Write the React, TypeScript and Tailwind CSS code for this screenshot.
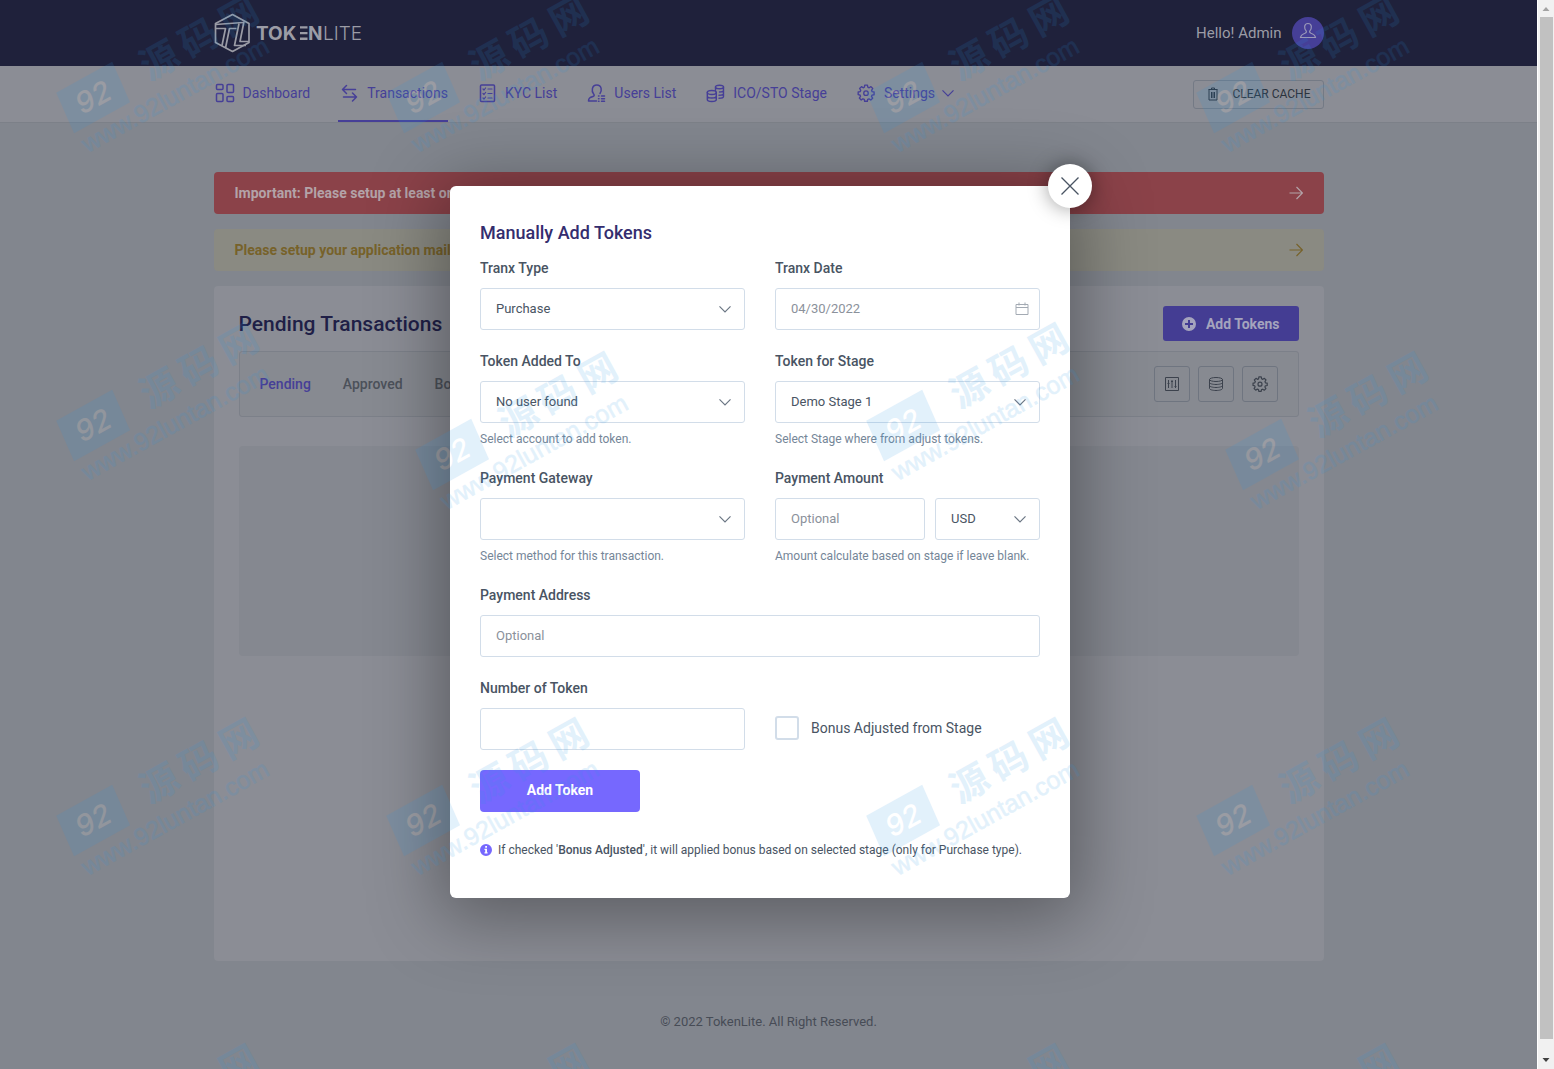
import React from "react";

type IconProps = { className?: string };

const stroke = {
  viewBox: "0 0 20 20",
  fill: "none",
  stroke: "currentColor",
  strokeWidth: 1.5,
  strokeLinecap: "round" as const,
  strokeLinejoin: "round" as const,
  "aria-hidden": true,
};

function Logo() {
  return (
    <svg width="150" height="40" viewBox="0 0 150 40" role="img" aria-label="TokenLite" className="block text-[#9b9ca6]">
      <g fill="none" stroke="currentColor" strokeWidth="1.7" strokeLinejoin="round">
        <path d="M18.500 1.500 35 10.500V29.500L18.500 38.500 1.500 29.500V10.500Z" />
        <path d="M1.500 11.500 29 9.500" />
        <path d="M2 15.500H11.500L8 32.500M22.500 15.500H15.500L11.500 35M25 10.500 20.500 32.500H32M30 8.500 26 28.500H35" />
      </g>
      <g fill="currentColor" fontFamily="Inter, sans-serif" fontSize="19">
        <text x="42" y="27" fontWeight="700">TOK</text>
        <path d="M86 13.200h7.500v2.400H86zM86 18.900h7.500v2.400H86zM86 24.600h7.500v2.400H86z" />
        <text x="94" y="27" fontWeight="700">N</text>
        <text x="109" y="27" fontWeight="300">LITE</text>
      </g>
    </svg>
  );
}

const DashboardIcon = () => (
  <svg {...stroke} className="size-5">
    <rect x="1.500" y="1.500" width="6.500" height="5" rx="1" />
    <rect x="1.500" y="10.500" width="6.500" height="8" rx="1" />
    <rect x="12" y="1.500" width="6.500" height="8" rx="1" />
    <rect x="12" y="13.500" width="6.500" height="5" rx="1" />
  </svg>
);
const TransferIcon = () => (
  <svg {...stroke} className="size-5">
    <path d="M16.500 6.500H3.500M7.500 2.500l-4 4 4 4M4.500 14h13M13.500 10l4 4-4 4" />
  </svg>
);
const ListIcon = () => (
  <svg {...stroke} className="size-5">
    <rect x="3.500" y="2" width="14" height="16.500" rx="1" />
    <path strokeWidth="1.200" d="m6 6 1 1 1.600-2M6 10.500l1 1 1.600-2M6 15l1 1 1.600-2M11 6h4M11 10.500h4M11 15h4" />
  </svg>
);
const UsersIcon = () => (
  <svg {...stroke} className="size-5">
    <path d="M10.500 18H2.500C2.500 15 4 14.500 7 13.500 8.500 13 8.500 12 7.500 10.800 5.500 8.500 5.500 2 10.800 2 16 2 16 8 14 10.500" />
    <path d="M12.500 13h.5M15.500 13H18.500M12.500 15.700h.5M15.500 15.700H18.500M12.500 18.300h.5M15.500 18.300H18.500" />
  </svg>
);
const CoinsIcon = () => (
  <svg {...stroke} strokeWidth={1.4} className="size-5">
    <ellipse cx="14.500" cy="4" rx="4" ry="1.800" />
    <path d="M10.500 4v3.500M18.500 4v9.500c0 1-2 1.800-4.500 1.800M18.500 7.200c0 1.100-1.800 1.800-4 1.800M18.500 10.400c0 1.100-2 1.800-4.500 1.800" />
    <ellipse cx="6.800" cy="9.500" rx="4.500" ry="2" />
    <path d="M2.300 9.500v7c0 1.200 2 2 4.500 2s4.500-.8 4.500-2v-7M2.300 13c0 1.200 2 2 4.500 2s4.500-.8 4.500-2" />
  </svg>
);
const GearIcon = ({ className = "size-5" }: IconProps) => (
  <svg {...stroke} className={className}>
    <path d="M8.500 2h3l.4 2.300 1.500.7 2-1.300 2 2.100-1.300 2 .6 1.500 2.200.4v3l-2.300.4-.6 1.500 1.300 2-2.100 2-1.900-1.300-1.500.6-.4 2.100h-3l-.4-2.200-1.500-.6-1.900 1.300-2.100-2.100 1.300-1.900-.6-1.500L1.200 12.600V9.700l2.200-.4.700-1.500-1.300-2 2.100-2.100L6.700 5l1.400-.6z" transform="translate(.1 -.8)" />
    <circle cx="10" cy="10.200" r="2.500" />
  </svg>
);
const ChevronIcon = ({ className = "" }: IconProps) => (
  <svg viewBox="0 0 12 12" fill="none" stroke="currentColor" strokeWidth="1.200" aria-hidden className={className}>
    <path d="m.5 3.300 5.500 5.500 5.500-5.500" />
  </svg>
);
const ArrowIcon = ({ className = "" }: IconProps) => (
  <svg viewBox="0 0 14 14" fill="none" stroke="currentColor" strokeWidth="1.200" aria-hidden className={className}>
    <path d="M.5 7H13M7.500 1l6 6-6 6" />
  </svg>
);

const navItems = [
  { label: "Dashboard", icon: <DashboardIcon /> },
  { label: "Transactions", icon: <TransferIcon />, active: true },
  { label: "KYC List", icon: <ListIcon /> },
  { label: "Users List", icon: <UsersIcon /> },
  { label: "ICO/STO Stage", icon: <CoinsIcon /> },
  { label: "Settings", icon: <GearIcon className="size-[18px]" />, menu: true },
];

function Header() {
  return (
    <header>
      <div className="bg-[#1f213b]">
        <div className="mx-auto flex h-[66px] max-w-[1110px] items-center justify-between">
          <a href="#home"><Logo /></a>
          <div className="flex items-center gap-2.5">
            <span className="text-[15px] text-[#9b9ca6]">Hello! Admin</span>
            <button type="button" aria-label="Account" className="flex size-8 items-center justify-center rounded-full bg-[#463f97] text-[#9a98b8]">
              <svg viewBox="0 0 18 18" fill="none" stroke="currentColor" strokeWidth="1.200" className="mb-1 size-[18px]" aria-hidden>
                <path d="M9 1.500c-4.500 0-3.800 5.500-1.800 7.500.6 1.200-.2 1.800-1.200 2.200-2.500.9-4 1.500-4.500 4.300h15c-.5-2.800-2-3.400-4.500-4.300-1-.4-1.800-1-1.200-2.200 2-2 2.700-7.500-1.800-7.500z" />
              </svg>
            </button>
          </div>
        </div>
      </div>
      <div className="border-b border-[#7c8088] bg-[#8b8d95]">
        <div className="mx-auto flex h-14 max-w-[1110px] items-center justify-between">
          <nav className="flex h-full gap-7">
            {navItems.map((item) => (
              <a
                key={item.label}
                href={"#" + item.label}
                className={
                  item.active
                    ? "flex items-center gap-[7px] border-b-2 border-[#463f97] text-sm text-[#463f97]"
                    : "flex items-center gap-[7px] border-b-2 border-transparent text-sm text-[#463f97]"
                }
              >
                <span className="flex w-[22px] justify-center">{item.icon}</span>
                {item.label}
                {item.menu && <ChevronIcon className="size-3" />}
              </a>
            ))}
          </nav>
          <button type="button" className="flex h-[29px] items-center gap-3 rounded-[3px] border border-[#747a85] px-3 text-xs text-[#2c333d]">
            <svg viewBox="0 0 14 14" fill="none" stroke="currentColor" strokeWidth="1" className="size-3.5" aria-hidden>
              <path d="M2.500 2.500h9M5.500 2.500V1h3v1.500M3 2.500v10.500h8V2.500M5.500 5v6M7 5v6M8.500 5v6" />
            </svg>
            CLEAR CACHE
          </button>
        </div>
      </div>
    </header>
  );
}

const toolClass = "flex size-9 items-center justify-center rounded-[3px] border border-[#6f7580] text-[#3c424d]";

function Page() {
  return (
    <>
      <Header />
      <main className="mx-auto mt-[49px] flex w-full max-w-[1110px] flex-col gap-[15px] text-sm font-medium">
        <a href="#payment" className="flex h-[42px] items-center justify-between rounded bg-[#8b4249] px-[21px] pb-px font-bold text-[#b3a3a8]">
          Important: Please setup at least one payment method
          <ArrowIcon className="size-3.5" />
        </a>
        <a href="#mail" className="flex h-[42px] items-center justify-between rounded bg-[#8a8a82] px-[21px] pb-px font-bold text-[#77622a]">
          Please setup your application mail setting
          <ArrowIcon className="size-3.5" />
        </a>
        <section className="min-h-[675px] rounded bg-[#8b8d95] px-[25px] pt-5">
          <div className="flex items-center justify-between">
            <h1 className="text-[21px] text-[#201f47]">Pending Transactions</h1>
            <button type="button" className="flex h-[35px] items-center gap-2.5 rounded-[3px] bg-[#443d93] px-[19px] font-bold text-[#a5a4bd]">
              <svg viewBox="0 0 14 14" className="size-3.5" aria-hidden>
                <path fill="currentColor" fillRule="evenodd" d="M7 0a7 7 0 1 0 0 14A7 7 0 0 0 7 0zM6 3h2v3h3v2H8v3H6V8H3V6h3z" />
              </svg>
              Add Tokens
            </button>
          </div>
          <div className="mt-2.5 flex h-[66px] items-center justify-between rounded-[3px] border border-[#7c8089] bg-[#878a91] px-5">
            <div className="flex gap-8">
              <a href="#pending" className="text-[#463f97]">Pending</a>
              <a href="#approved" className="text-[#4c515a]">Approved</a>
              <a href="#bonuses" className="text-[#4c515a]">Bonuses</a>
            </div>
            <div className="flex gap-2">
              <button type="button" aria-label="Filter" className={toolClass}>
                <svg viewBox="0 0 16 16" fill="none" stroke="currentColor" className="size-4" aria-hidden>
                  <path d="M1.500 1.500h13v13h-13zM4.500 4v8M8 4v8M11.500 4v8M3.500 7.500h2M7 5.500h2M10.500 10.500h2" />
                </svg>
              </button>
              <button type="button" aria-label="Records" className={toolClass}>
                <svg viewBox="0 0 16 16" fill="none" stroke="currentColor" className="size-4" aria-hidden>
                  <ellipse cx="8" cy="3.500" rx="6.500" ry="2" />
                  <path d="M1.500 3.500v9c0 1 2.900 2 6.500 2s6.500-1 6.500-2v-9M1.500 6.500c0 1 2.900 2 6.500 2s6.500-1 6.500-2M1.500 9.500c0 1 2.900 2 6.500 2s6.500-1 6.500-2" />
                </svg>
              </button>
              <button type="button" aria-label="Options" className={toolClass}>
                <GearIcon className="size-4" />
              </button>
            </div>
          </div>
          <div className="mt-[29px] h-[210px] rounded bg-[#858890]" />
        </section>
      </main>
      <footer className="pt-[51px] pb-9 text-center text-[13px] leading-5 text-[#474c56]">© 2022 TokenLite. All Right Reserved.</footer>
    </>
  );
}

const controlClass =
  "h-[42px] w-full appearance-none rounded-[3px] border border-[#d2dde9] bg-white px-[15px] text-[13px] text-[#495463] outline-none placeholder:text-[#8b919b]";

function Field({ id, label, hint, children }: { id: string; label: string; hint?: string; children: React.ReactNode }) {
  return (
    <div>
      <label htmlFor={id} className="mb-2.5 block text-sm leading-5 font-medium text-[#495463]">{label}</label>
      {children}
      {hint && <p className="mt-2 text-xs leading-4 whitespace-nowrap text-[#758698]">{hint}</p>}
    </div>
  );
}

function Select({ id, value, label }: { id: string; value: string; label?: string }) {
  return (
    <div className="relative">
      <select id={id} aria-label={label} defaultValue={value} className={controlClass}>
        <option value={value}>{value}</option>
      </select>
      <ChevronIcon className="pointer-events-none absolute top-[15px] right-3.5 size-3 text-[#6b7684]" />
    </div>
  );
}

function AddTokensDialog() {
  return (
    <div className="absolute inset-0 flex items-start justify-center pt-[186px] pr-[17px]">
      <div
        role="dialog"
        aria-labelledby="dialog-title"
        className="relative w-full max-w-[620px] rounded-md bg-white px-[30px] pt-[31px] pb-[38px] shadow-[0_10px_70px_10px_rgba(0,0,0,0.35)]"
      >
        <button
          type="button"
          aria-label="Close"
          className="absolute -top-[22px] -right-[22px] flex size-11 items-center justify-center rounded-full bg-white text-[#495463] shadow-[0_0_20px_rgba(0,0,0,0.4)]"
        >
          <svg viewBox="0 0 18 18" fill="none" stroke="currentColor" strokeWidth="1.300" className="size-[18px]" aria-hidden>
            <path d="m.5.5 17 17M17.500.5l-17 17" />
          </svg>
        </button>
        <h2 id="dialog-title" className="mb-[9px] text-lg leading-8 font-medium text-[#342d6e]">Manually Add Tokens</h2>
        <form onSubmit={(e) => e.preventDefault()}>
          <div className="grid grid-cols-2 gap-x-[30px] gap-y-[21px]">
            <Field id="type" label="Tranx Type">
              <Select id="type" value="Purchase" />
            </Field>
            <Field id="date" label="Tranx Date">
              <div className="relative">
                <input id="date" type="text" defaultValue="04/30/2022" className={controlClass + " pb-0.5 !text-[#8b919b]"} />
                <svg viewBox="0 0 14 14" fill="none" stroke="currentColor" className="absolute top-3.5 right-[11px] size-3.5 text-[#a3aab3]" aria-hidden>
                  <path d="M1 2.500h12v10H1zM1 5.500h12M4 .5v3M10 .5v3" />
                </svg>
              </div>
            </Field>
            <Field id="user" label="Token Added To" hint="Select account to add token.">
              <Select id="user" value="No user found" />
            </Field>
            <Field id="stage" label="Token for Stage" hint="Select Stage where from adjust tokens.">
              <Select id="stage" value="Demo Stage 1" />
            </Field>
            <Field id="gateway" label="Payment Gateway" hint="Select method for this transaction.">
              <Select id="gateway" value="" />
            </Field>
            <Field id="amount" label="Payment Amount" hint="Amount calculate based on stage if leave blank.">
              <div className="flex gap-2.5">
                <div className="flex-1">
                  <input id="amount" type="text" placeholder="Optional" className={controlClass + " pb-0.5"} />
                </div>
                <div className="w-[105px]">
                  <Select id="currency" label="Currency" value="USD" />
                </div>
              </div>
            </Field>
            <div className="col-span-2">
              <Field id="address" label="Payment Address">
                <input id="address" type="text" placeholder="Optional" className={controlClass + " pb-0.5"} />
              </Field>
            </div>
            <Field id="number" label="Number of Token">
              <input id="number" type="text" className={controlClass + " pb-0.5"} />
            </Field>
            <label className="flex items-center gap-3 self-end pb-2.5 text-sm leading-6 text-[#495463]">
              <input type="checkbox" className="size-6 appearance-none rounded-[3px] border-2 border-[#d2dde9] bg-white" />
              Bonus Adjusted from Stage
            </label>
          </div>
          <button type="submit" className="mt-5 block h-[42px] w-40 rounded bg-[#7668fe] pb-0.5 text-sm font-bold text-white">
            Add Token
          </button>
        </form>
        <p className="mt-7 flex items-center gap-1.5 text-xs leading-5 text-[#495463]">
          <svg viewBox="0 0 12 12" className="size-3 text-[#7668fe]" aria-hidden>
            <path fill="currentColor" fillRule="evenodd" d="M6 0a6 6 0 1 0 0 12A6 6 0 0 0 6 0zM5.200 2h1.800v1.700H5.200zM4.500 4.700H7v3.600h.6v1.300H4.500V8.300h.7V6h-.7z" />
          </svg>
          <span>
            If checked '<strong className="font-medium">Bonus Adjusted</strong>', it will applied bonus based on selected stage (only for Purchase type).
          </span>
        </p>
      </div>
    </div>
  );
}

const marks = [
  [94, 97], [424, 97], [904, 97], [1234, 97],
  [94, 425], [453, 454], [904, 425], [1263, 454],
  [94, 820], [424, 820], [904, 820], [1234, 820],
];
const lowerMarks = [94, 424, 904, 1234];

const cjk = {
  fontFamily: "'Noto Sans CJK SC', sans-serif",
  fontSize: 38,
  fontWeight: 700,
  textAnchor: "middle" as const,
};

function Watermarks() {
  return (
    <svg className="pointer-events-none absolute inset-0 size-full overflow-hidden" aria-hidden>
      {marks.map(([x, y]) => (
        <g key={x + "-" + y} transform={`translate(${x} ${y}) rotate(-29)`} opacity="0.13" fill="#2896e6">
          <path d="M-31-22h64l-4 44h-64z" />
          <text x="-1" y="10" textAnchor="middle" fontFamily="Inter, sans-serif" fontSize="29" fontWeight="500" fontStyle="italic" fill="#fff">92</text>
          <g {...cjk}>
            <text x="75" y="13">源</text>
            <text x="120" y="13">码</text>
            <text x="166" y="13">网</text>
          </g>
          <text x="-33" y="46" fontFamily="'Liberation Sans', sans-serif" fontSize="25" stroke="#2896e6" strokeWidth="0.600">www.92luntan.com</text>
        </g>
      ))}
      {lowerMarks.map((x) => (
        <g key={x} transform={`translate(${x} 1146) rotate(-29)`} opacity="0.13" fill="#2896e6" {...cjk}>
          <text x="166" y="13">网</text>
        </g>
      ))}
    </svg>
  );
}

function ScrollBar() {
  return (
    <div aria-hidden className="flex w-[17px] flex-col items-center border-l border-white bg-[#f1f1f1]">
      <svg viewBox="0 0 16 17" className="h-[17px] w-4"><path d="M4.500 11h7L8 7z" fill="#a3a3a3" /></svg>
      <div className="w-[13px] flex-1 bg-[#c1c1c1]" />
      <svg viewBox="0 0 16 30" className="h-[30px] w-4"><path d="M4.500 19h7L8 23z" fill="#404040" /></svg>
    </div>
  );
}

export default function App() {
  return (
    <div className="flex min-h-screen font-['Roboto',sans-serif]">
      <div className="relative min-w-0 flex-1 overflow-hidden bg-[#82868e]">
        <Page />
        <AddTokensDialog />
        <Watermarks />
      </div>
      <ScrollBar />
    </div>
  );
}
